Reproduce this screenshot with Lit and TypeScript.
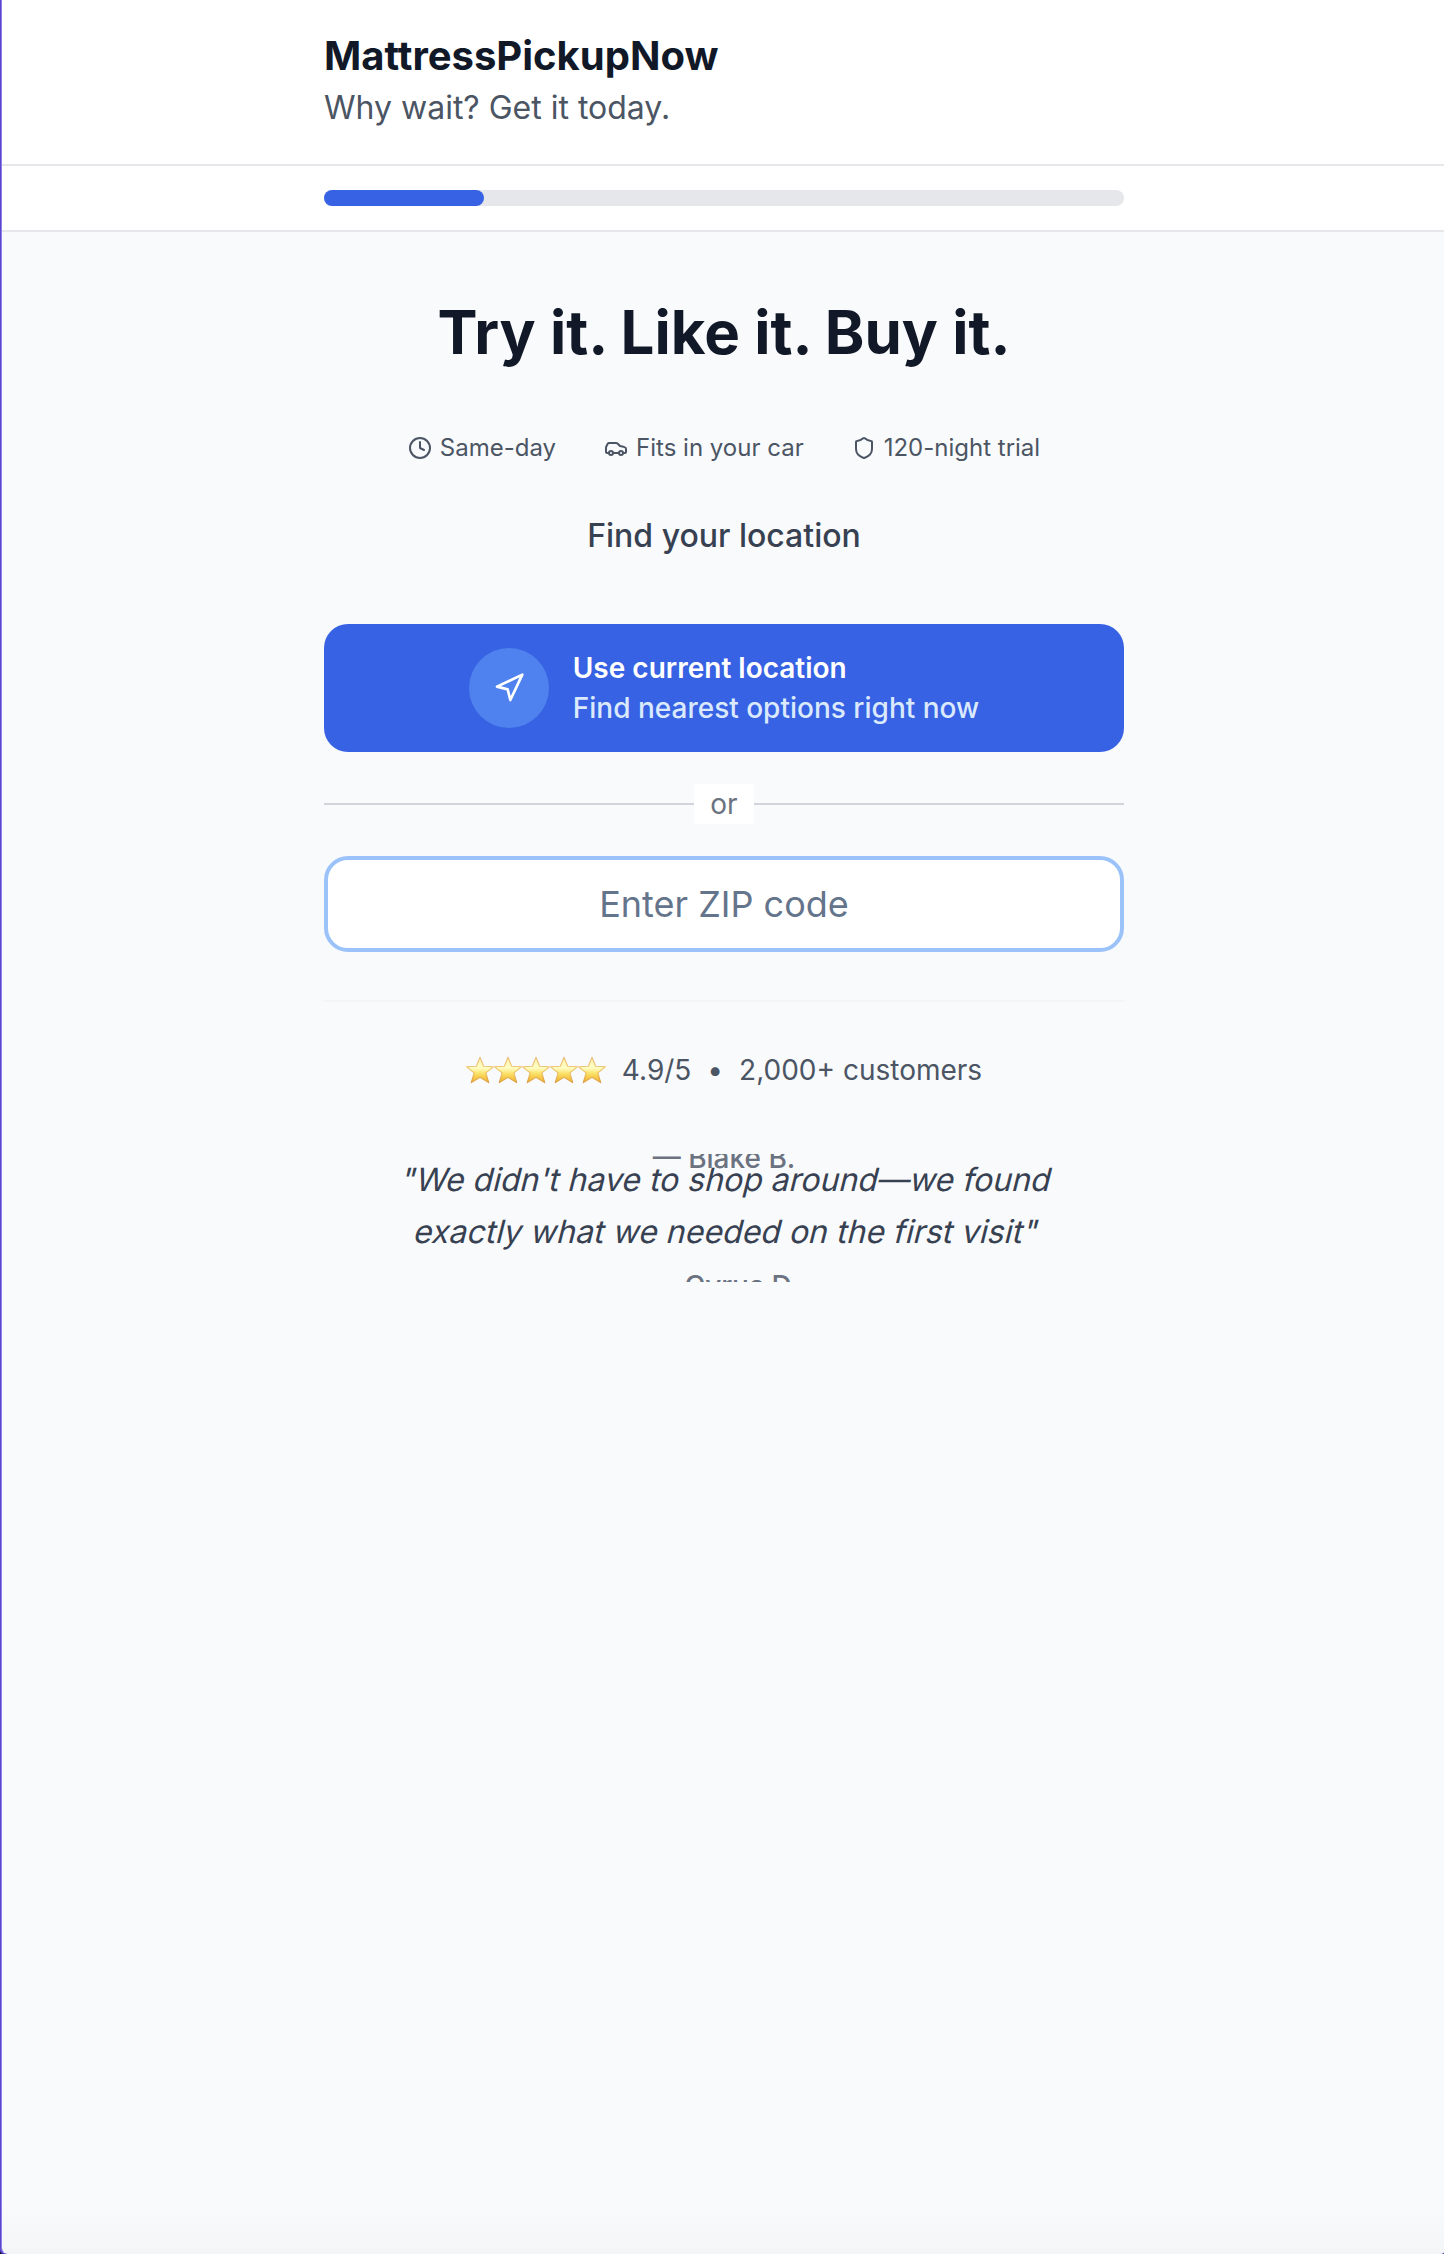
import { LitElement, html, css, svg } from "lit";
import { customElement, property } from "lit/decorators.js";

const icons = {
  clock: svg`<circle cx="12" cy="12" r="10"/><polyline points="12 6 12 12 16 14"/>`,
  car: svg`<path d="M19 17h2c.6 0 1-.4 1-1v-3c0-.9-.7-1.7-1.5-1.9C18.7 10.6 16 10 16 10s-1.3-1.4-2.2-2.3c-.5-.4-1.1-.7-1.8-.7H5c-.6 0-1.1.4-1.4.9l-1.4 2.9A3.7 3.7 0 0 0 2 12v4c0 .6.4 1 1 1h2"/><circle cx="7" cy="17" r="2"/><path d="M9 17h6"/><circle cx="17" cy="17" r="2"/>`,
  shield: svg`<path d="M20 13c0 5-3.5 7.5-7.66 8.95a1 1 0 0 1-.67-.01C7.5 20.5 4 18 4 13V6a1 1 0 0 1 1-1c2 0 4.5-1.2 6.24-2.72a1.17 1.17 0 0 1 1.52 0C14.51 3.81 17 5 19 5a1 1 0 0 1 1 1z"/>`,
  navigation: svg`<polygon points="3 11 22 2 13 21 11 13 3 11"/>`,
};

@customElement("line-icon")
class LineIcon extends LitElement {
  @property() name: keyof typeof icons = "clock";
  static styles = css`
    :host { display: block; width: 24px; height: 24px; flex: none; }
    .icon { display: block; width: 100%; height: 100%; fill: none; stroke: currentColor; stroke-width: 2; stroke-linecap: round; stroke-linejoin: round; }
  `;
  render() {
    return html`<svg class="icon" viewBox="0 0 24 24">${icons[this.name]}</svg>`;
  }
}

@customElement("gold-star")
class GoldStar extends LitElement {
  static styles = css`
    :host { display: block; width: 28px; height: 28px; }
    .star { display: block; width: 28px; height: 28px; }
  `;
  render() {
    return html`<svg class="star" viewBox="0 0 28 28">
      <defs>
        <linearGradient id="fill" x1="0" y1="0" x2="0" y2="1">
          <stop offset="0" stop-color="#fdf0a8"/>
          <stop offset=".42" stop-color="#fffdc4"/>
          <stop offset=".65" stop-color="#fbe066"/>
          <stop offset="1" stop-color="#efab2c"/>
        </linearGradient>
        <linearGradient id="edge" x1="0" y1="0" x2="0" y2="1">
          <stop offset="0" stop-color="#e9bd78"/>
          <stop offset=".5" stop-color="#efc671"/>
          <stop offset="1" stop-color="#dc9d3c"/>
        </linearGradient>
      </defs>
      <path d="M14 1.3 17.7 10.3 27.4 10.8 19.9 16.9 22.7 26.6 14 21.4 5.3 26.6 8.1 16.9 .6 10.8 10.3 10.3Z" fill="url(#fill)" stroke="url(#edge)" stroke-width="1.1" stroke-linejoin="round"/>
    </svg>`;
  }
}

@customElement("app-root")
class AppRoot extends LitElement {
  @property({ type: Number }) progress = 20;

  static styles = css`
    :host { display: block; font-family: Inter, "Liberation Sans", sans-serif; color: #111827; background: #0c0a18; }
    * { box-sizing: border-box; margin: 0; }
    .window { height: 2254px; overflow: hidden; background: #5a45cf; border-bottom-left-radius: 4px; }
    .page { width: 1444px; height: 2254px; margin-left: 2px; background: linear-gradient(#f9fafc 2206px, #f4f5f7 2254px); border-bottom-left-radius: 6px; border-bottom-right-radius: 6px; box-shadow: -1px 0 0 #8f80e6; }
    .column { width: 800px; margin: 0 auto; }
    .header { height: 166px; padding-top: 32px; background: #fff; border-bottom: 2px solid #e5e7eb; }
    .brand { font-size: 40px; line-height: 48px; font-weight: 700; margin-bottom: 4px; color: #111827; }
    .tagline { font-size: 32px; line-height: 48px; color: #4b5563; }
    .progress { height: 66px; padding-top: 24px; background: #fff; border-bottom: 2px solid #e5e7eb; }
    .track { height: 16px; border-radius: 8px; background: #e5e7eb; }
    .bar { height: 16px; border-radius: 8px; background: #3762e3; }
    .main { display: flex; flex-direction: column; padding-top: 64px; text-align: center; }
    .title { font-size: 60px; line-height: 72px; font-weight: 700; margin-bottom: 64px; }
    .perks { display: flex; justify-content: center; gap: 48px; font-size: 24px; line-height: 32px; color: #4b5563; margin-bottom: 48px; }
    .perk { display: flex; align-items: center; gap: 8px; white-space: nowrap; }
    .prompt { font-size: 32px; line-height: 48px; font-weight: 500; color: #374151; margin-bottom: 64px; }
    .locate { display: flex; align-items: center; justify-content: center; gap: 24px; height: 128px; width: 100%; border: 0; padding: 0; border-radius: 24px; background: #3762e3; font: 500 28px/40px Inter, "Liberation Sans", sans-serif; color: #fff; text-align: left; white-space: nowrap; }
    .disc { display: flex; align-items: center; justify-content: center; width: 80px; height: 80px; border-radius: 50%; background: #4f82ee; }
    .disc line-icon { width: 32px; height: 32px; }
    .strong { font-weight: 600; }
    .soft { color: #dbe9fd; }
    .divider { display: flex; align-items: center; margin: 32px 0; }
    .rule { flex: 1; height: 2px; background: #d1d5db; }
    .or { width: 60px; font-size: 28px; line-height: 40px; background: #fff; color: #6b7280; }
    .zip { width: 100%; height: 96px; border: 4px solid #9bc3fa; border-radius: 24px; background: #fff; text-align: center; font: 400 36px/56px Inter, "Liberation Sans", sans-serif; padding: 0 32px; outline: none; }
    .zip::placeholder { color: #64748b; opacity: 1; }
    .proof { margin-top: 48px; padding-top: 48px; border-top: 2px solid #f3f4f6; }
    .rating { display: flex; align-items: center; justify-content: center; gap: 16px; height: 40px; font-size: 28px; line-height: 40px; color: #4b5563; margin-bottom: 64px; white-space: nowrap; }
    .stars { display: flex; }
    .carousel { height: 128px; overflow: hidden; }
    .slides { margin-top: -128px; }
    .slide { display: flex; flex-direction: column; justify-content: flex-end; height: 128px; }
    .slide .author { margin-bottom: -24px; }
    .quote { font-size: 32px; line-height: 52px; color: #374151; margin-bottom: 8px; white-space: nowrap; }
    /* Slanted upright letterforms, sheared about the text baseline. */
    .line { display: block; transform: skewX(-14deg); transform-origin: 50% 37.6px; }
    .author { font-size: 28px; line-height: 40px; font-weight: 500; color: #6b7280; }
  `;

  render() {
    return html`
      <div class="window">
        <div class="page">
          <header class="header">
            <div class="column">
              <div class="brand">MattressPickupNow</div>
              <div class="tagline">Why wait? Get it today.</div>
            </div>
          </header>
          <div class="progress">
            <div class="column track"><div class="bar" style="width:${this.progress}%"></div></div>
          </div>
          <main class="column main">
            <h1 class="title">Try it. Like it. Buy it.</h1>
            <div class="perks">
              <span class="perk"><line-icon name="clock"></line-icon><span>Same-day</span></span>
              <span class="perk"><line-icon name="car"></line-icon><span>Fits in your car</span></span>
              <span class="perk"><line-icon name="shield"></line-icon><span>120-night trial</span></span>
            </div>
            <h2 class="prompt">Find your location</h2>
            <button class="locate">
              <span class="disc"><line-icon name="navigation"></line-icon></span>
              <span><div class="strong">Use current location</div><div class="soft">Find nearest options right now</div></span>
            </button>
            <div class="divider"><span class="rule"></span><span class="or">or</span><span class="rule"></span></div>
            <input class="zip" placeholder="Enter ZIP code">
            <section class="proof">
              <div class="rating">
                <span class="stars">${[1, 2, 3, 4, 5].map(() => html`<gold-star></gold-star>`)}</span>
                <span>4.9/5</span><span>•</span><span>2,000+ customers</span>
              </div>
              <div class="carousel">
                <div class="slides">
                  <div class="slide"><div class="author">— Blake B.</div></div>
                  <div class="slide">
                    <div class="quote"><span class="line">"We didn't have to shop around—we found</span><span class="line">exactly what we needed on the first visit"</span></div>
                    <div class="author">— Cyrus D.</div>
                  </div>
                </div>
              </div>
            </section>
          </main>
        </div>
      </div>
    `;
  }
}
